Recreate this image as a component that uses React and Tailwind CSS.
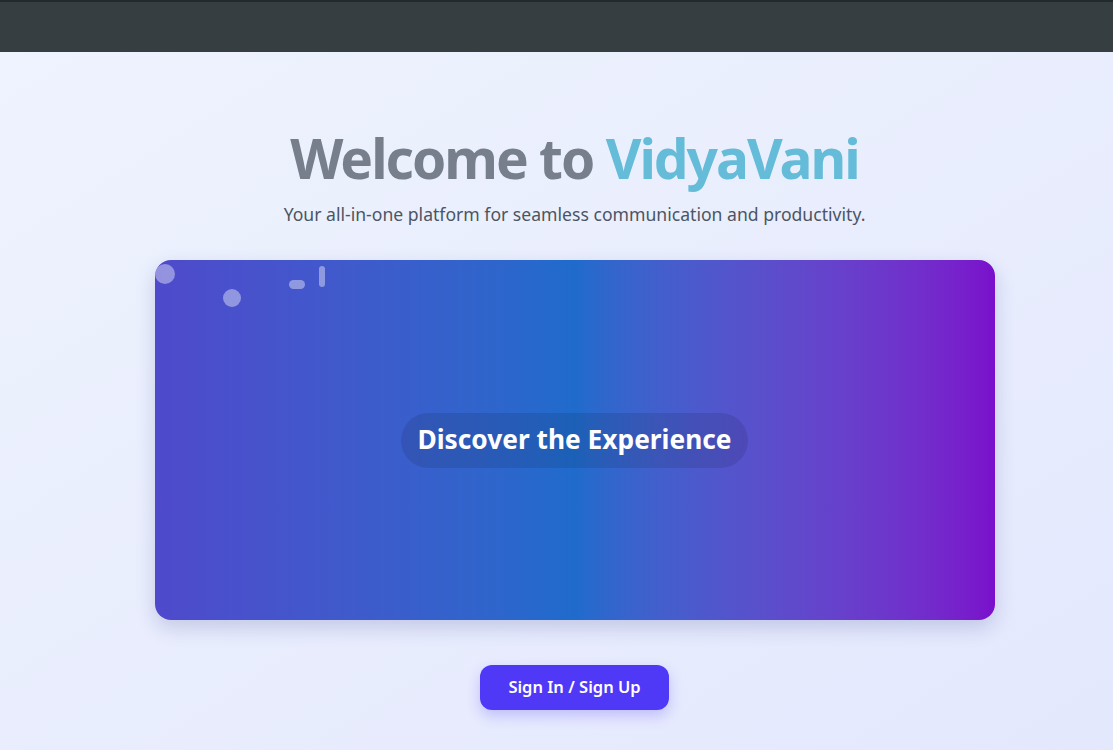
export default function App() {
  return (
    <div className="min-h-[750px] flex flex-col" style={{ fontFamily: '"Noto Sans", "Open Sans", sans-serif' }}>
      <div className="h-[52px] bg-[#363e41] border-t-2 border-[#222a2c] shrink-0" />
      <main className="flex-1 bg-gradient-to-br from-[#eef3fe] to-[#e4e8fd] flex flex-col items-center pt-[74px] pl-[36px]">
        <h1 className="text-[55px] leading-[64px] font-bold text-[#777f8d] tracking-[-2px]">
          Welcome to <span className="text-[#65bcd8]">VidyaVani</span>
        </h1>
        <p className="mt-[12px] text-[17.6px] leading-[24px] text-[#4b5563]">
          Your all-in-one platform for seamless communication and productivity.
        </p>
        <div className="relative mt-[34px] w-[840px] h-[360px] rounded-2xl overflow-hidden bg-gradient-to-r from-[#4e4acb] via-[#1f6bcc] to-[#7a0fcb] shadow-[0_8px_20px_rgba(30,40,120,0.18)] flex items-center justify-center">
          <span className="absolute left-[0px] top-[4px] w-[20px] h-[20px] rounded-full bg-white/40" />
          <span className="absolute left-[68px] top-[29px] w-[18px] h-[18px] rounded-full bg-white/40" />
          <span className="absolute left-[134px] top-[20px] w-[16px] h-[9px] rounded-full bg-white/40" />
          <span className="absolute left-[164px] top-[6px] w-[6px] h-[21px] rounded-full bg-white/40" />
          <div className="px-[16px] h-[55px] flex items-center rounded-full bg-black/10">
            <span className="text-[26.3px] font-bold text-white">Discover the Experience</span>
          </div>
        </div>
        <button className="mt-[45px] w-[189px] h-[45px] rounded-xl bg-[#4f39f6] text-white text-[16.5px] font-semibold shadow-[0_6px_14px_rgba(79,57,246,0.25)]">
          Sign In / Sign Up
        </button>
      </main>
    </div>
  );
}
